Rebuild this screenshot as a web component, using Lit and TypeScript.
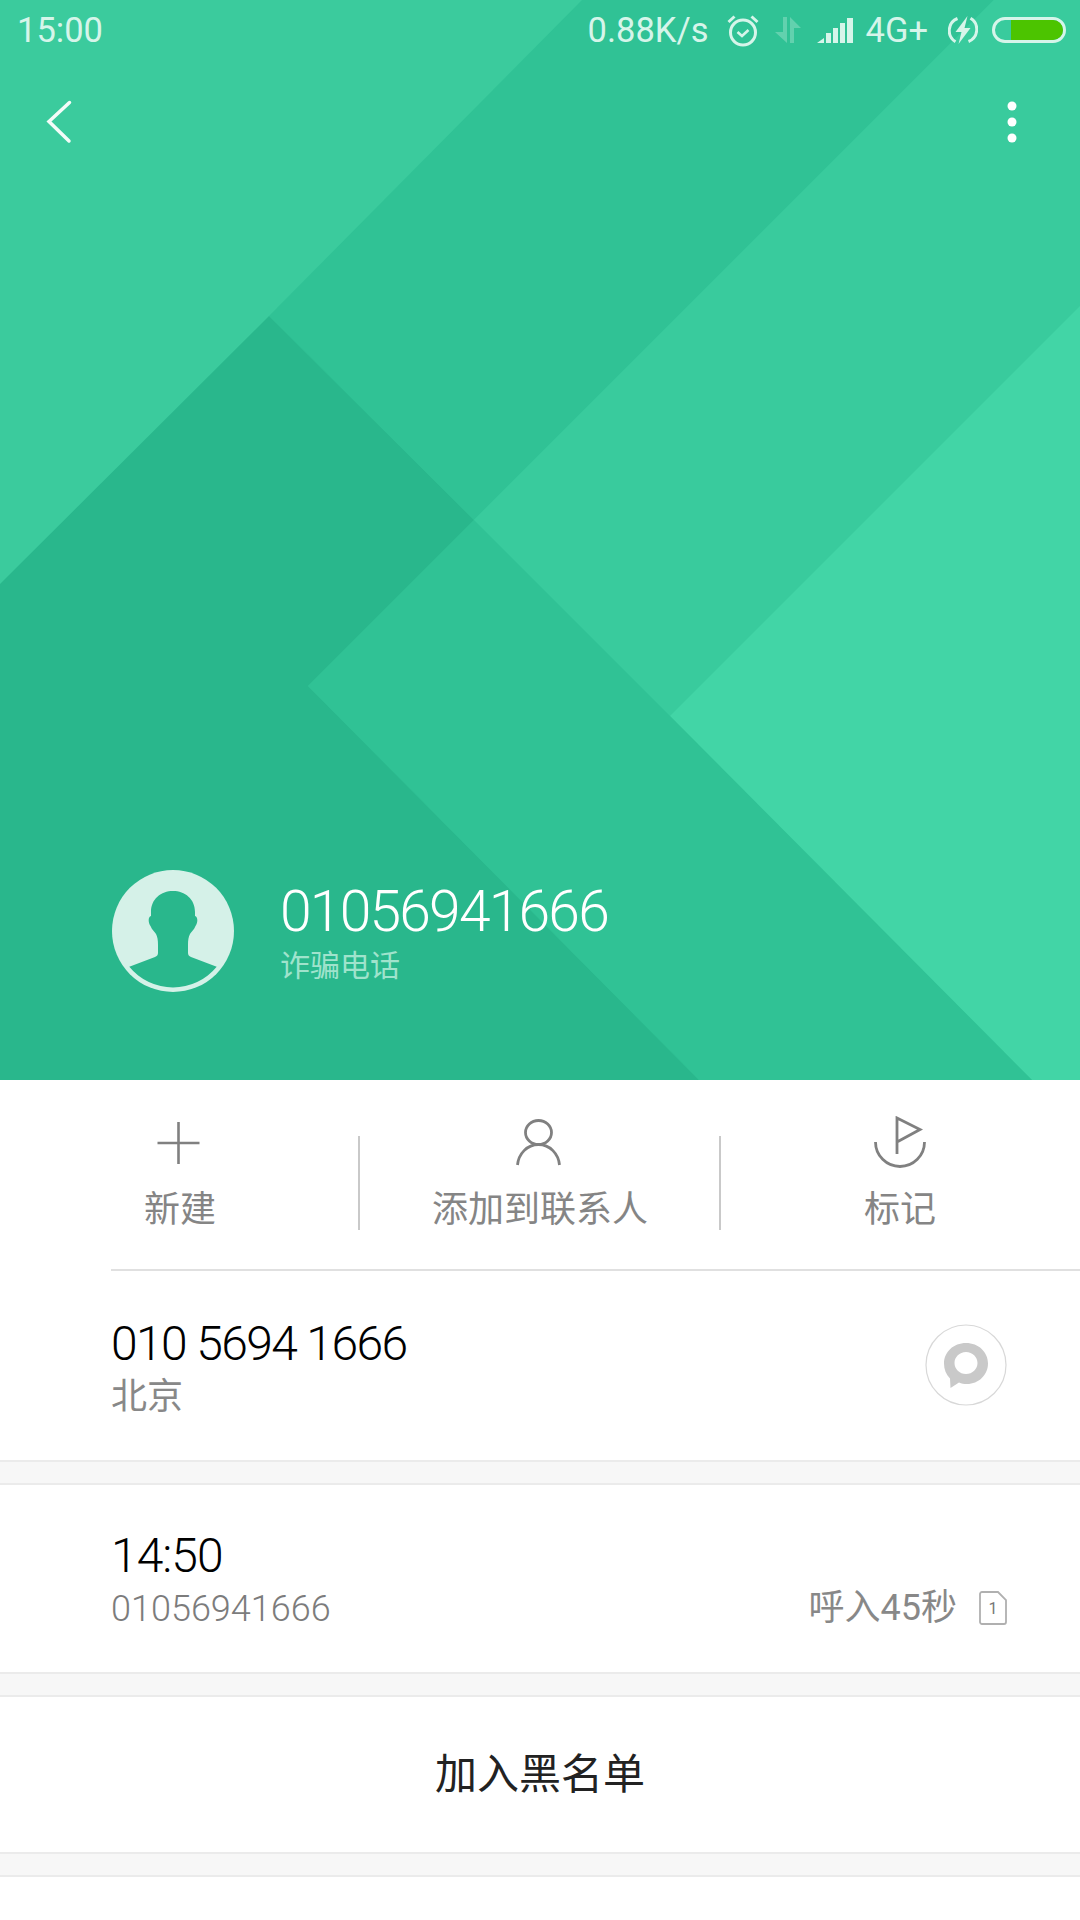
import { LitElement, css, html, svg } from 'lit'
import { customElement } from 'lit/decorators.js'

// Diagonal panels behind the caller header
const panels = [
  { fill: '#3bcb9d', points: '0,0 1080,0 1080,1080 0,1080' },
  { fill: '#30c295', points: '582,0 994,0 474,520 269,316' },
  { fill: '#39cb9d', points: '994,0 1080,0 1080,306 670,716 474,520' },
  { fill: '#42d5a6', points: '1080,306 670,716 1032,1080 1080,1080' },
  { fill: '#30c295', points: '474,520 670,716 1032,1080 699,1080 308,686' },
  { fill: '#29b78c', points: '0,584 269,316 474,520 308,686 699,1080 0,1080' }
]

@customElement('app-root')
export class AppRoot extends LitElement {
  static styles = css`
    :host {
      display: block;
      width: 1080px;
      height: 1920px;
      overflow: hidden;
      background: #fff;
      font-family: Roboto, 'Noto Sans CJK SC', sans-serif;
    }

    .header {
      position: relative;
      display: flex;
      flex-direction: column;
      height: 1080px;
      box-sizing: border-box;
      color: #fff;
    }

    .backdrop {
      position: absolute;
      inset: 0;
      width: 1080px;
      height: 1080px;
    }

    .status,
    .nav,
    .caller {
      position: relative;
    }

    .status {
      display: flex;
      align-items: center;
      height: 60px;
      padding: 0 14px 0 17px;
      font-size: 34.5px;
      color: #d6f5ea;
    }

    .status svg {
      display: block;
      flex: none;
    }

    .time {
      margin-right: auto;
    }

    .speed {
      margin-right: 18px;
    }

    .alarm,
    .arrows {
      margin-right: 16px;
    }

    .signal {
      margin-right: 12px;
    }

    .network {
      margin-right: 20px;
    }

    .bolt {
      margin-right: 14px;
    }

    .nav {
      display: flex;
      align-items: center;
      justify-content: space-between;
      height: 124px;
      padding: 0 62px 0 46px;
    }

    .nav svg {
      display: block;
    }

    .caller {
      display: flex;
      align-items: center;
      gap: 46px;
      margin-top: auto;
      padding: 0 0 88px 112px;
    }

    .avatar {
      display: block;
      flex: none;
      width: 122px;
      height: 122px;
    }

    .caller-number {
      font-size: 57px;
      font-weight: 300;
      line-height: 66px;
      letter-spacing: -1.8px;
    }

    .caller-tag {
      margin-top: 3px;
      font-size: 30px;
      line-height: 36px;
      color: #9fe3cc;
    }

    .actions {
      display: grid;
      grid-template-columns: repeat(3, 360px);
      height: 189px;
    }

    .action {
      display: flex;
      flex-direction: column;
      align-items: center;
      position: relative;
      padding-top: 36px;
      box-sizing: border-box;
      font-size: 36px;
      line-height: 44px;
      color: #858585;
    }

    .action + .action::before {
      content: '';
      position: absolute;
      left: -2px;
      top: 56px;
      width: 2px;
      height: 94px;
      background: #c9c9c9;
    }

    .action:last-child::before {
      left: -1px;
    }

    .action svg {
      display: block;
      width: 56px;
      height: 56px;
      margin-bottom: 16px;
    }

    .rule {
      height: 1.5px;
      margin-left: 111px;
      background: #e0e0e0;
    }

    .row {
      display: flex;
      align-items: center;
      justify-content: space-between;
      box-sizing: border-box;
      padding: 0 73px 0 111px;
      background: #fff;
    }

    .phone {
      height: 189.5px;
    }

    .log {
      height: 187px;
    }

    .primary {
      font-size: 48px;
      font-weight: 300;
      line-height: 56px;
      color: #000;
    }

    .phone .primary {
      letter-spacing: -1.6px;
    }

    .log .primary {
      letter-spacing: -1px;
      padding-top: 1px;
    }

    .secondary {
      font-size: 36px;
      line-height: 44px;
      color: #888;
    }

    .log .secondary {
      margin-top: 3px;
      font-weight: 300;
      color: #7c7c7c;
    }

    .phone .texts {
      padding-top: 4px;
    }

    .phone .secondary {
      margin-top: 3px;
    }

    .message {
      display: block;
      width: 82px;
      height: 82px;
      margin-top: -1px;
    }

    .call-type {
      display: flex;
      align-items: center;
      gap: 22px;
      align-self: flex-end;
      padding-bottom: 42px;
      font-size: 36px;
      line-height: 44px;
      color: #888;
    }

    .call-type svg {
      display: block;
    }

    .sim-digit {
      font-size: 16px;
      fill: #777;
      text-anchor: middle;
    }

    .gap {
      height: 21px;
      background: #f7f7f7;
      border-top: 2px solid #ebebeb;
      border-bottom: 2px solid #ebebeb;
    }

    .block {
      display: flex;
      align-items: center;
      justify-content: center;
      height: 155px;
      font-size: 42px;
      line-height: 50px;
      color: #222;
    }
  `

  private renderStatus() {
    return html`
      <div class="status">
        <span class="time">15:00</span>
        <span class="speed">0.88K/s</span>
        <svg class="alarm" width="32" height="33" viewBox="0 0 32 33" fill="none" stroke="#d6f5ea">
          <circle cx="16" cy="18.5" r="12.5" stroke-width="3" />
          <path d="M10.5 18l4.5 4 6.5-6" stroke-width="2.6" />
          <path d="M1.5 8l6-5.5M30.5 8l-6-5.5" stroke-width="3" />
        </svg>
        <svg class="arrows" width="26" height="26" viewBox="0 0 26 26" fill="#d6f5ea" opacity="0.3">
          <path d="M8 0h4v26L0 15h8z" />
          <path d="M15 0l11 11h-7v15h-4z" />
        </svg>
        <svg class="signal" width="37" height="25" viewBox="0 0 37 25" fill="#d6f5ea">
          <path d="M0 25l7-5v5z" />
          <rect x="9" y="15" width="5" height="10" />
          <rect x="16" y="10" width="5" height="15" />
          <rect x="23" y="5" width="5" height="20" />
          <rect x="30" y="0" width="6" height="25" />
        </svg>
        <span class="network">4G+</span>
        <svg class="bolt" width="30" height="30" viewBox="0 0 30 30" fill="none" stroke="#d6f5ea" stroke-width="3">
          <path d="M9.5 3.5a13 13 0 0 0-2 23.2M20.5 26.5a13 13 0 0 0 2-23.2" />
          <path d="M19.5 1L7.5 17h6l-3 12 12-16h-6z" fill="#d6f5ea" stroke="none" />
        </svg>
        <svg width="74" height="26" viewBox="0 0 74 26" fill="none">
          <rect x="1.5" y="1.5" width="71" height="23" rx="11.5" stroke="#d6f5ea" stroke-width="3" />
          <path d="M19 3h42a10 10 0 0 1 0 20H19z" fill="#4cc400" />
        </svg>
      </div>
    `
  }

  private renderActions() {
    return html`
      <div class="actions">
        <div class="action">
          <svg viewBox="0 0 56 56" fill="none" stroke="#808080" stroke-width="2.6">
            <path d="M26.5 6v42M5.5 27h42" />
          </svg>
          新建
        </div>
        <div class="action">
          <svg viewBox="0 0 56 56" fill="none" stroke="#808080" stroke-width="2.8">
            <ellipse cx="26.5" cy="16.5" rx="13" ry="12" />
            <path d="M5.5 49c1-11 9.5-20.5 21-20.5S46.5 38 47.5 49" />
          </svg>
          添加到联系人
        </div>
        <div class="action">
          <svg viewBox="0 0 56 56" fill="none" stroke="#808080" stroke-width="2.8">
            <path d="M25 38V2l23 11.5L25 26" />
            <path d="M3.500 26a24.500 24.500 0 0 0 49 0" />
          </svg>
          标记
        </div>
      </div>
    `
  }

  render() {
    return html`
      <div class="header">
        <svg class="backdrop" viewBox="0 0 1080 1080">
          ${panels.map((p) => svg`<polygon points=${p.points} fill=${p.fill} />`)}
        </svg>
        ${this.renderStatus()}
        <div class="nav">
          <svg width="26" height="44" viewBox="0 0 26 44" fill="none" stroke="#f4fcf9" stroke-width="3.5" stroke-linecap="round">
            <path d="M23.5 2.5L3 21.5l20 19.5" />
          </svg>
          <svg width="12" height="44" viewBox="0 0 12 44" fill="#fff">
            <circle cx="6" cy="6" r="4.5" />
            <circle cx="6" cy="22" r="4.5" />
            <circle cx="6" cy="38" r="4.5" />
          </svg>
        </div>
        <div class="caller">
          <svg class="avatar" viewBox="0 0 122 122">
            <circle cx="61" cy="61" r="61" fill="#d5f1e8" />
            <path
              fill="#29b78c"
              d="M61 21C49 21 39 29 39 42v4c-3 1-3 6-.5 10 1.5 4 4.5 6 5.5 8 1.5 3 2 6 2 11v8c0 2-1 3-3 4L17.3 96.7a56.5 56.5 0 0 0 87.4 0L79 87c-2-1-3-2-3-4v-8c0-5 .5-8 2-11 1-2 4-4 5.5-8 2.5-4 2.5-9-.5-10v-4c0-13-10-21-22-21z"
            />
          </svg>
          <div>
            <div class="caller-number">01056941666</div>
            <div class="caller-tag">诈骗电话</div>
          </div>
        </div>
      </div>

      ${this.renderActions()}
      <div class="rule"></div>

      <div class="row phone">
        <div class="texts">
          <div class="primary">010 5694 1666</div>
          <div class="secondary">北京</div>
        </div>
        <svg class="message" viewBox="0 0 82 82">
          <circle cx="41" cy="41" r="40" fill="#fff" stroke="#d8d8d8" stroke-width="1.2" />
          <path
            fill="#c9c9c9"
            fill-rule="evenodd"
            d="M41 19c12.5 0 22 9 22 20.5S53.5 60 42 60c-3 0-5.5-.5-8-1.5L25.5 64l-.5-9.5C21 50.5 19 45.5 19 39.5 19 28 28.5 19 41 19zm0 9c-6.5 0-11.5 5-11.5 11S34.5 50 41 50s11.5-5 11.5-11S47.5 28 41 28z"
          />
        </svg>
      </div>
      <div class="gap"></div>

      <div class="row log">
        <div>
          <div class="primary">14:50</div>
          <div class="secondary">01056941666</div>
        </div>
        <div class="call-type">
          呼入45秒
          <svg width="28" height="34" viewBox="0 0 28 34" fill="none">
            <path d="M3 1h16l8 8v22a2 2 0 0 1-2 2H3a2 2 0 0 1-2-2V3a2 2 0 0 1 2-2z" stroke="#b0b0b0" stroke-width="1.8" />
            <text class="sim-digit" x="14" y="23">1</text>
          </svg>
        </div>
      </div>
      <div class="gap"></div>

      <div class="block">加入黑名单</div>
      <div class="gap"></div>
    `
  }
}
